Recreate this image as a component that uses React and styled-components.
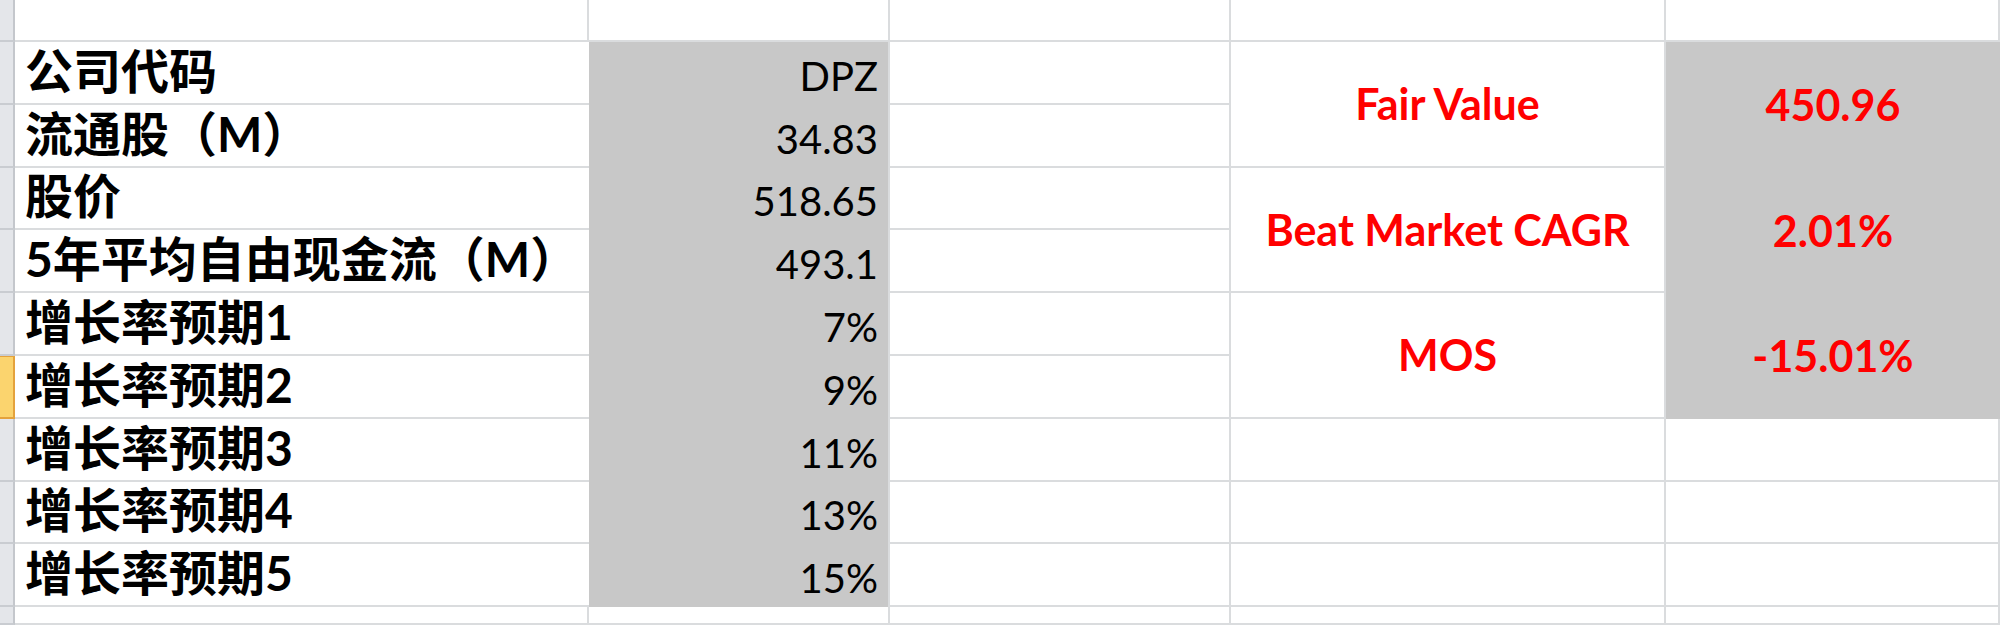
import styled, { createGlobalStyle } from "styled-components";

const GlobalStyle = createGlobalStyle`
  html, body {
    margin: 0;
    padding: 0;
    background: #ffffff;
    overflow: hidden;
  }
  * {
    box-sizing: border-box;
  }
`;

const inputs = [
  ["公司代码", "DPZ"],
  ["流通股（M）", "34.83"],
  ["股价", "518.65"],
  ["5年平均自由现金流（M）", "493.1"],
  ["增长率预期1", "7%"],
  ["增长率预期2", "9%"],
  ["增长率预期3", "11%"],
  ["增长率预期4", "13%"],
  ["增长率预期5", "15%"],
];

const results = [
  ["Fair Value", "450.96"],
  ["Beat Market CAGR", "2.01%"],
  ["MOS", "-15.01%"],
];

const ACTIVE_ROW = 5;

const App = () => {
  return (
    <>
      <GlobalStyle />
      <Sheet>
        <RowHead />
        <Cell />
        <Cell />
        <Cell />
        <Cell />
        <Cell />

        {inputs.map(([label, value], i) => {
          // results take two rows each, starting on the first input row
          const result = i % 2 === 0 && i / 2 < results.length ? results[i / 2] : null;
          return [
            <RowHead key={`h${i}`} $active={i === ACTIVE_ROW} />,
            <Label key={`l${i}`}>{label}</Label>,
            <Value key={`v${i}`}>{value}</Value>,
            <Cell key={`e${i}`} />,
            result && <MetricName key={`m${i}`}>{result[0]}</MetricName>,
            result && <MetricValue key={`r${i}`}>{result[1]}</MetricValue>,
            i >= 6 && <Cell key={`a${i}`} />,
            i >= 6 && <Cell key={`b${i}`} />,
          ];
        })}

        <RowHead />
        <Cell />
        <Cell />
        <Cell />
        <Cell />
        <Cell />
      </Sheet>
    </>
  );
};

export default App;

const Sheet = styled.div`
  display: grid;
  width: 2000px;
  height: 625px;
  grid-template-columns: 15px 574px 301px 341px 435px 1fr;
  grid-template-rows: 42px repeat(9, 62.8px) 1fr;
  font-family: Lato, "Noto Sans CJK SC", sans-serif;
  color: #000000;
  overflow: hidden;
`;

const Cell = styled.div`
  border-right: 2px solid #dadcde;
  border-bottom: 2px solid #dadcde;
  background: #ffffff;
`;

const RowHead = styled.div`
  background: ${(p) => (p.$active ? "#fbd46e" : "#e4e6ea")};
  border-right: 2px solid ${(p) => (p.$active ? "#e4a23c" : "#c4c7cc")};
  border-bottom: 2px solid ${(p) => (p.$active ? "#e4a23c" : "#c9ccd1")};
  border-top: ${(p) => (p.$active ? "1px solid #e4a23c" : "none")};
`;

const Label = styled(Cell)`
  display: flex;
  align-items: flex-end;
  padding: 0 0 8px 10px;
  border-right: none;
  font-size: 48px;
  font-weight: 700;
  line-height: 1;
  white-space: nowrap;
`;

const Value = styled.div`
  display: flex;
  align-items: flex-end;
  justify-content: flex-end;
  padding: 0 10px 9px 0;
  background: #c8c8c8;
  border-right: 2px solid #dadcde;
  font-size: 40px;
  font-weight: 400;
  line-height: 1;
`;

const MetricName = styled(Cell)`
  grid-row: span 2;
  display: flex;
  align-items: center;
  justify-content: center;
  color: #ff0000;
  font-size: 43px;
  font-weight: 700;
  line-height: 1;
  white-space: nowrap;
`;

const MetricValue = styled.div`
  grid-row: span 2;
  display: flex;
  align-items: center;
  justify-content: center;
  background: #c8c8c8;
  color: #ff0000;
  font-size: 43px;
  font-weight: 700;
  line-height: 1;
`;
